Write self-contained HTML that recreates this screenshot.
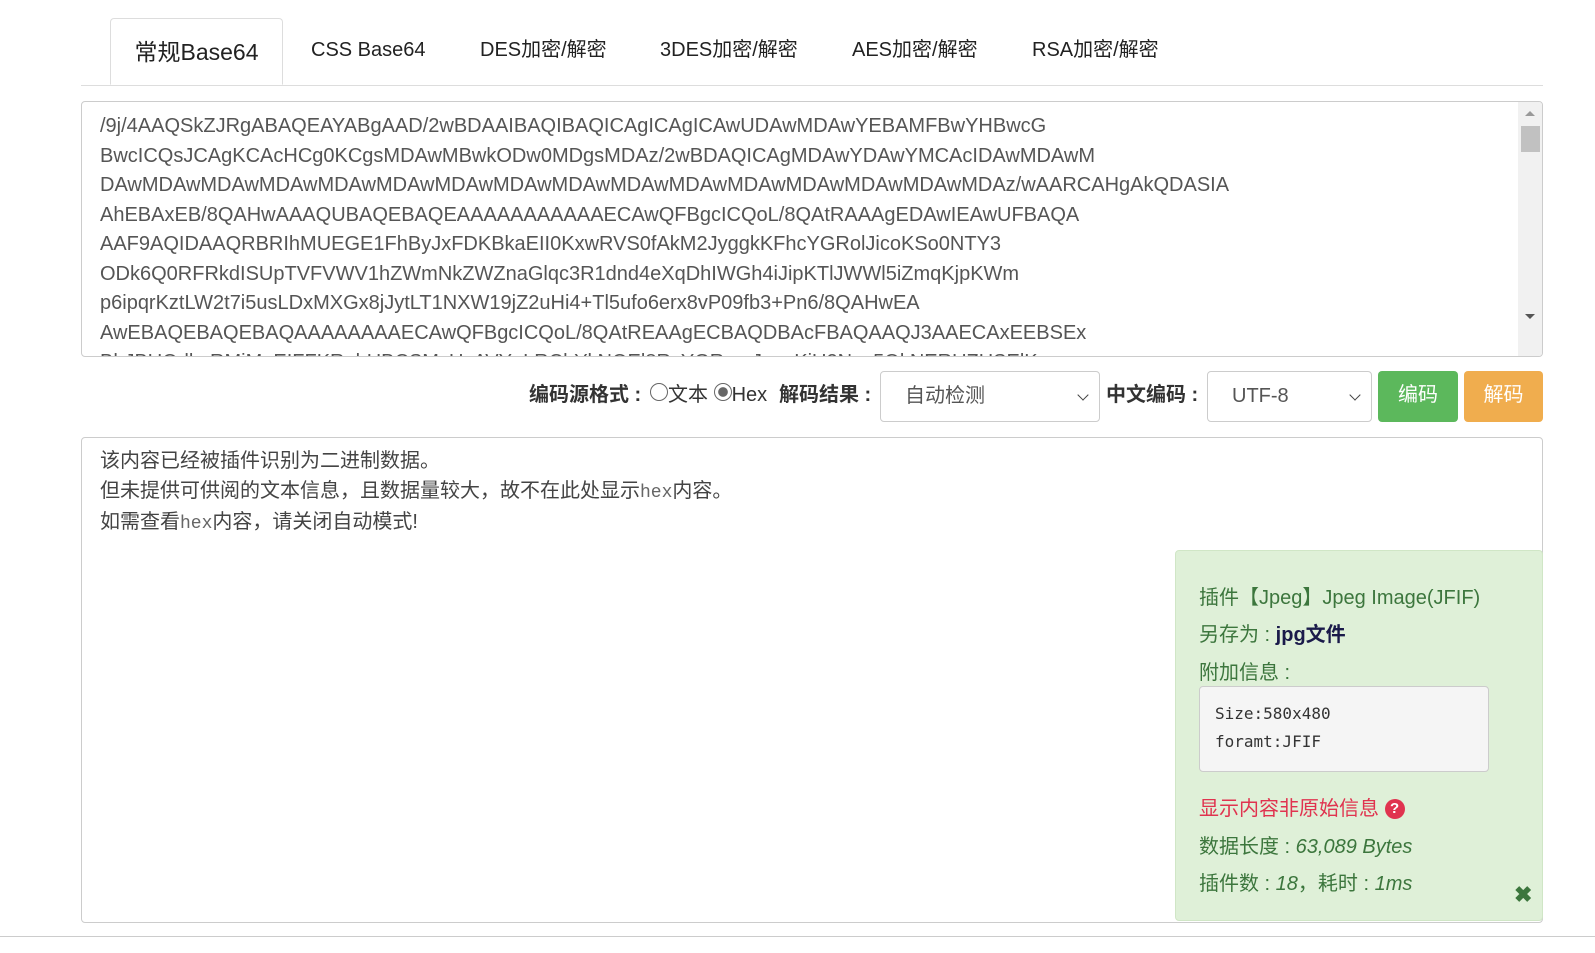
<!DOCTYPE html>
<html><head><meta charset="utf-8"><style>
body{margin:0;width:1595px;height:953px;background:#fff;font-family:"Liberation Sans","Noto Sans CJK SC",sans-serif;position:relative;overflow:hidden;color:#333}
.tabs{position:absolute;left:81px;top:18px;width:1462px;height:67px;border-bottom:1px solid #ddd}
.tab{position:absolute;top:20px;font-size:20px;line-height:24px;height:24px;color:#222}
.tab.act{top:0;left:29px;width:173px;height:67px;border:1px solid #ddd;border-bottom:1px solid #fff;border-radius:4px 4px 0 0;background:#fff;box-sizing:border-box;font-size:23px;text-align:center;line-height:66px;color:#222}
.ta{position:absolute;border:1px solid #ccc;border-radius:4px;box-sizing:border-box;overflow:hidden}
.t1{left:81px;top:101px;width:1462px;height:256px}
.t1 .txt{position:absolute;left:18px;top:10px;font-size:20px;line-height:29.5px;color:#555;white-space:pre}
.sb{position:absolute;right:0;top:0;width:24px;height:100%;background:#f1f1f1}
.sb .th{position:absolute;left:3px;top:24px;width:19px;height:26px;background:#c1c1c1}
.t2{left:81px;top:437px;width:1462px;height:486px}
.t2 .txt{position:absolute;left:18px;top:9px;font-size:20px;line-height:29.5px;color:#444}
.mono{font-family:"Liberation Mono","DejaVu Sans Mono",monospace;color:#666;font-size:18px}
.lbl{position:absolute;top:382px;font-size:20px;line-height:26px;font-weight:bold;color:#333}
.sel{position:absolute;top:371px;height:51px;border:1px solid #ccc;border-radius:4px;box-sizing:border-box;font-size:20px;color:#555;line-height:49px;padding-left:24px}
.sel:after{content:"";position:absolute;right:12px;top:19px;width:7px;height:7px;border-right:1.5px solid #444;border-bottom:1.5px solid #444;transform:rotate(45deg)}
.btn{position:absolute;top:371px;height:51px;border-radius:4px;color:#fff;font-size:20px;text-align:center;line-height:49px}
.rad{display:inline-block;width:18px;height:18px;border:1px solid #666;border-radius:50%;box-sizing:border-box;vertical-align:0px;position:relative}
.info{position:absolute;left:1175px;top:550px;width:368px;height:371px;background:#dff0d8;border:1px solid #d0e6c6;border-radius:4px;box-sizing:border-box;color:#3c763d;font-size:20px}
.info div.l{position:absolute;left:23px}
pre{position:absolute;left:23px;top:135px;width:290px;height:86px;margin:0;background:#f5f5f5;border:1px solid #ccc;border-radius:4px;box-sizing:border-box;font-family:"DejaVu Sans Mono",monospace;font-size:16px;line-height:28px;padding:13px 15px;color:#333}
</style></head><body>
<div class="tabs">
<div class="tab act">常规Base64</div>
<div class="tab" style="left:230px">CSS Base64</div>
<div class="tab" style="left:399px">DES加密/解密</div>
<div class="tab" style="left:579px">3DES加密/解密</div>
<div class="tab" style="left:771px">AES加密/解密</div>
<div class="tab" style="left:951px">RSA加密/解密</div>
</div>
<div class="ta t1"><div class="txt">/9j/4AAQSkZJRgABAQEAYABgAAD/2wBDAAIBAQIBAQICAgICAgICAwUDAwMDAwYEBAMFBwYHBwcG
BwcICQsJCAgKCAcHCg0KCgsMDAwMBwkODw0MDgsMDAz/2wBDAQICAgMDAwYDAwYMCAcIDAwMDAwM
DAwMDAwMDAwMDAwMDAwMDAwMDAwMDAwMDAwMDAwMDAwMDAwMDAwMDAwMDAwMDAz/wAARCAHgAkQDASIA
AhEBAxEB/8QAHwAAAQUBAQEBAQEAAAAAAAAAAAECAwQFBgcICQoL/8QAtRAAAgEDAwIEAwUFBAQA
AAF9AQIDAAQRBRIhMUEGE1FhByJxFDKBkaEII0KxwRVS0fAkM2JyggkKFhcYGRolJicoKSo0NTY3
ODk6Q0RFRkdISUpTVFVWV1hZWmNkZWZnaGlqc3R1dnd4eXqDhIWGh4iJipKTlJWWl5iZmqKjpKWm
p6ipqrKztLW2t7i5usLDxMXGx8jJytLT1NXW19jZ2uHi4+Tl5ufo6erx8vP09fb3+Pn6/8QAHwEA
AwEBAQEBAQEBAQAAAAAAAAECAwQFBgcICQoL/8QAtREAAgECBAQDBAcFBAQAAQJ3AAECAxEEBSEx
BhJBUQdhcRMiMoEIFFKRobHBCSMzUvAVYnLRChYkNOEl8RcYGRomJygpKjU2Nzg5OkNERUZHSElK</div><div class="sb"><div class="th"></div><div style="position:absolute;left:7px;top:9px;border:5px solid transparent;border-bottom-color:#999;border-top:0"></div><div style="position:absolute;left:7px;top:212px;border:5px solid transparent;border-top-color:#555;border-bottom:0"></div></div></div>

<div class="lbl" style="left:529px">编码源格式 : </div>
<div style="position:absolute;left:650px;top:382px;font-size:20px;line-height:26px;color:#333"><span class="rad"></span>文本 <span class="rad" style="background:radial-gradient(#666 40%,#fff 45%)"></span>Hex</div>
<div class="lbl" style="left:779px">解码结果 : </div>
<div class="sel" style="left:880px;width:220px">自动检测</div>
<div class="lbl" style="left:1106px">中文编码 : </div>
<div class="sel" style="left:1207px;width:165px">UTF-8</div>
<div class="btn" style="left:1378px;width:80px;background:#5cb85c">编码</div>
<div class="btn" style="left:1464px;width:79px;background:#f0ad4e">解码</div>

<div class="ta t2"><div class="txt">该内容已经被插件识别为二进制数据。<br>但未提供可供阅的文本信息，且数据量较大，故不在此处显示<span class="mono">hex</span>内容。<br>如需查看<span class="mono">hex</span>内容，请关闭自动模式!</div></div>

<div class="info">
<div class="l" style="top:30px">插件【Jpeg】Jpeg Image(JFIF)</div>
<div class="l" style="top:67px">另存为 : <b style="color:#1a1a4a">jpg文件</b></div>
<div class="l" style="top:105px">附加信息 :</div>
<pre>Size:580x480
foramt:JFIF</pre>
<div class="l" style="top:241px;color:#e0334f">显示内容非原始信息 <span style="display:inline-block;width:20px;height:20px;border-radius:50%;background:#e0334f;color:#fff;font-size:15px;font-weight:bold;text-align:center;line-height:20px;vertical-align:2px">?</span></div>
<div class="l" style="top:279px">数据长度 : <i>63,089 Bytes</i></div>
<div class="l" style="top:316px">插件数 : <i>18</i>，耗时 : <i>1ms</i></div>
<div style="position:absolute;left:338px;top:331px;font-size:22px;font-weight:bold;color:#3c763d">✖</div>
</div>
<div style="position:absolute;left:0;top:936px;width:1595px;height:1px;background:#ccc"></div>
</body></html>
